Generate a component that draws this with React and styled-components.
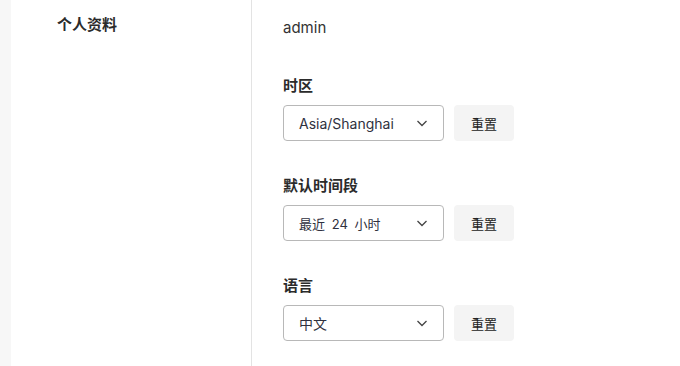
import React from "react";
import styled, { createGlobalStyle } from "styled-components";

const GlobalStyle = createGlobalStyle`
  html, body {
    margin: 0;
    padding: 0;
    background: #ffffff;
    overflow: hidden;
  }
  body {
    font-family: Inter, "Noto Sans CJK SC", sans-serif;
    color: #2b2b2b;
  }
`;

export const Page = styled.div`
  display: flex;
  height: 366px;
  background: #f7f7f7;
  padding-left: 11px;
`;

export const Sidebar = styled.nav`
  width: 241px;
  flex: none;
  background: #fff;
  border-right: 1px solid #e3e3e3;
  padding: 15px 0 0 46px;
  box-sizing: border-box;
`;

export const NavItem = styled.div`
  font-size: 15px;
  font-weight: 700;
  line-height: 20px;
  color: #2b2b2b;
`;

export const Main = styled.main`
  flex: 1;
  background: #fff;
  padding-left: 31px;
  display: flex;
  flex-direction: column;
  gap: 35px;
  margin-top: -19px;
`;

export const Field = styled.section`
  display: flex;
  flex-direction: column;
  gap: 9px;
`;

export const Label = styled.div`
  font-size: 15px;
  font-weight: 700;
  line-height: 20px;
  color: #2b2b2b;
`;

export const Value = styled.div`
  font-size: 15px;
  line-height: 26px;
  padding-top: 5px;
  color: #333;
`;

export const Row = styled.div`
  display: flex;
  align-items: center;
  gap: 10px;
`;

export const Select = styled.div`
  width: 161px;
  height: 36px;
  box-sizing: border-box;
  border: 1px solid #b8b8b8;
  border-radius: 4px;
  display: flex;
  align-items: center;
  justify-content: space-between;
  padding: 0 15px 0 15px;
  font-size: ${(p) => p.$size || 14}px;
  word-spacing: ${(p) => (p.$size ? 3 : 0)}px;
  color: #2f3140;
  cursor: pointer;
`;

export const ResetButton = styled.button`
  width: 60px;
  height: 36px;
  border: none;
  border-radius: 4px;
  background: #f4f4f4;
  font-family: "Noto Sans CJK SC", sans-serif;
  font-size: 13px;
  color: #222;
  cursor: pointer;
`;

const Chevron = () => (
  <svg width="12" height="12" viewBox="0 0 12 12" fill="none">
    <path d="M1.5 4l4.5 4.5L10.5 4" stroke="#444" strokeWidth="1.3" />
  </svg>
);

const SelectField = ({ label, value, size }) => (
  <Field>
    <Label>{label}</Label>
    <Row>
      <Select $size={size}>
        <span>{value}</span>
        <Chevron />
      </Select>
      <ResetButton>重置</ResetButton>
    </Row>
  </Field>
);

export default function App() {
  return (
    <>
      <GlobalStyle />
      <Page>
        <Sidebar>
          <NavItem>个人资料</NavItem>
        </Sidebar>
        <Main>
          <Field>
            <Label>用户名</Label>
            <Value>admin</Value>
          </Field>
          <SelectField label="时区" value="Asia/Shanghai" />
          <SelectField label="默认时间段" value="最近 24 小时" size={13} />
          <SelectField label="语言" value="中文" />
        </Main>
      </Page>
    </>
  );
}
